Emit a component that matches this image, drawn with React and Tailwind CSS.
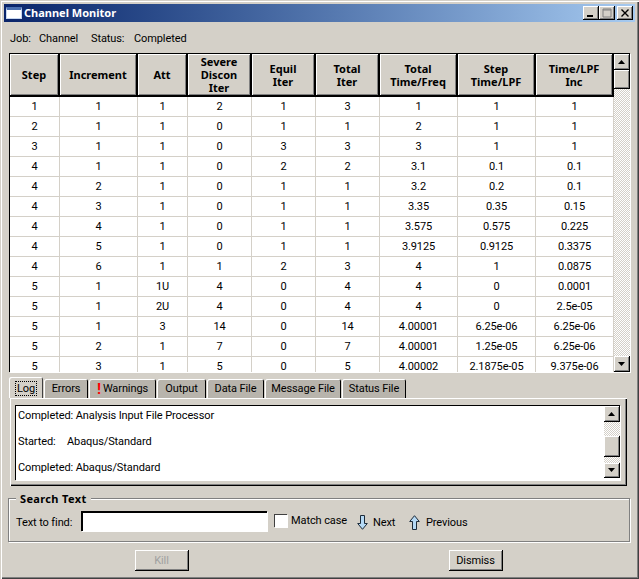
import React from 'react';

const columns = [
  { label: ['Step'], w: 'w-[50px]' },
  { label: ['Increment'], w: 'w-[78px]' },
  { label: ['Att'], w: 'w-[50px]' },
  { label: ['Severe', 'Discon', 'Iter'], w: 'w-[64px]' },
  { label: ['Equil', 'Iter'], w: 'w-[64px]' },
  { label: ['Total', 'Iter'], w: 'w-[64px]' },
  { label: ['Total', 'Time/Freq'], w: 'w-[78px]' },
  { label: ['Step', 'Time/LPF'], w: 'w-[78px]' },
  { label: ['Time/LPF', 'Inc'], w: 'w-[78px]' },
];

const rows = [
  ['1', '1', '1', '2', '1', '3', '1', '1', '1'],
  ['2', '1', '1', '0', '1', '1', '2', '1', '1'],
  ['3', '1', '1', '0', '3', '3', '3', '1', '1'],
  ['4', '1', '1', '0', '2', '2', '3.1', '0.1', '0.1'],
  ['4', '2', '1', '0', '1', '1', '3.2', '0.2', '0.1'],
  ['4', '3', '1', '0', '1', '1', '3.35', '0.35', '0.15'],
  ['4', '4', '1', '0', '1', '1', '3.575', '0.575', '0.225'],
  ['4', '5', '1', '0', '1', '1', '3.9125', '0.9125', '0.3375'],
  ['4', '6', '1', '1', '2', '3', '4', '1', '0.0875'],
  ['5', '1', '1U', '4', '0', '4', '4', '0', '0.0001'],
  ['5', '1', '2U', '4', '0', '4', '4', '0', '2.5e-05'],
  ['5', '1', '3', '14', '0', '14', '4.00001', '6.25e-06', '6.25e-06'],
  ['5', '2', '1', '7', '0', '7', '4.00001', '1.25e-05', '6.25e-06'],
  ['5', '3', '1', '5', '0', '5', '4.00002', '2.1875e-05', '9.375e-06'],
];

const boldFont = "font-bold font-['Noto_Sans',sans-serif] tracking-normal";
const raised = 'shadow-[inset_1px_1px_0_#fff,inset_-1px_-1px_0_#808080] border-r border-b border-[#000]';
const track = 'bg-[repeating-conic-gradient(#ffffff_0_25%,#d4d0c8_0_50%)] bg-[length:2px_2px]';

const ScrollBtn = ({ dir, h = 'h-[16px]' }) => (
  <div className={`${h} w-[16px] shrink-0 bg-[#d4d0c8] ${raised} flex items-center justify-center`}>
    {dir && (
      <svg width="7" height="4" viewBox="0 0 7 4">
        <path d={dir === 'up' ? 'M3.5 0L7 4H0Z' : 'M0 0H7L3.5 4Z'} fill="#000" />
      </svg>
    )}
  </div>
);

const TitleBtn = ({ children }) => (
  <div className={`w-[16px] h-[14px] bg-[#d4d0c8] ${raised} flex items-center justify-center`}>
    <svg width="10" height="10" viewBox="0 0 10 10">{children}</svg>
  </div>
);

const tabs = ['Log', 'Errors', 'Warnings', 'Output', 'Data File', 'Message File', 'Status File'];
const tabWidths = ['w-[34px]', 'w-[44px]', 'w-[67px]', 'w-[49px]', 'w-[57px]', 'w-[76px]', 'w-[64px]'];

const ArrowIcon = ({ up }) => (
  <svg width="11" height="15" viewBox="0 0 11 15" className={up ? 'mt-[2px]' : 'rotate-180 mt-[2px]'}>
    <path d="M5.5 .7L10.3 6.5H7.5V14.5H3.5V6.5H.7Z" fill="#b5d9f5" stroke="#1c2b3a" strokeWidth="1" />
  </svg>
);

export default function App() {
  return (
    <div className="w-[639px] h-[579px] flex flex-col bg-[#d4d0c8] text-[11px] tracking-[-0.1px] text-black font-['Roboto',sans-serif] shadow-[inset_1px_1px_0_#d4d0c8,inset_2px_2px_0_#fff,inset_-1px_-1px_0_#404040,inset_-2px_-2px_0_#808080] p-[4px] overflow-hidden">
      <div className="h-[18px] shrink-0 flex items-center bg-gradient-to-r from-[#0a246a] to-[#a6caf0] pl-[2px] pr-[2px]">
        <div className="w-[16px] h-[12px] bg-white border border-[#c8d8f0] border-t-[3px] border-t-[#4a6fb0]" />
        <span className={`ml-[2px] text-white ${boldFont}`}>Channel Monitor</span>
        <div className="ml-auto flex items-center">
          <TitleBtn><rect x="1" y="7" width="6" height="2" fill="#000" /></TitleBtn>
          <TitleBtn>
            <path d="M1 1H9V9H1ZM1 2H9" fill="none" stroke="#808080" />
          </TitleBtn>
          <div className="w-[2px]" />
          <TitleBtn><path d="M1.5 1.5L8.5 8.5M8.5 1.5L1.5 8.5" stroke="#000" strokeWidth="1.4" /></TitleBtn>
        </div>
      </div>

      <div className="h-[31px] shrink-0 flex items-center pl-[6px] pt-[3px]">
        <span className="w-[29px]">Job:</span>
        <span className="w-[52px]">Channel</span>
        <span className="w-[43px]">Status:</span>
        <span>Completed</span>
      </div>

      <div className="h-[319px] shrink-0 ml-[5px] w-[621px] flex border-t border-l border-[#000] shadow-[1px_1px_0_#fff]">
        <div className="w-[604px] shrink-0 overflow-hidden flex flex-col bg-white">
          <div className="flex h-[43px] shrink-0">
            {columns.map((c, i) => (
              <div key={i} className={`${c.w} shrink-0 bg-[#d4d0c8] ${raised} border-b-2 border-r-2 flex flex-col items-center justify-center ${boldFont} leading-[13px]`}>
                {c.label.map((l) => <span key={l}>{l}</span>)}
              </div>
            ))}
          </div>
          {rows.map((r, i) => (
            <div key={i} className="flex h-[20px] shrink-0">
              {r.map((v, j) => (
                <div key={j} className={`${columns[j].w} shrink-0 border-r border-b border-[#d4d0c8] flex items-center justify-center pt-[2px]`}>{v}</div>
              ))}
            </div>
          ))}
        </div>
        <div className="ml-auto w-[16px] flex flex-col">
          <ScrollBtn dir="up" />
          <ScrollBtn h="h-[19px]" />
          <div className={`flex-1 ${track}`} />
          <ScrollBtn dir="down" />
        </div>
      </div>

      <div className="h-[26px] shrink-0 flex items-end gap-[1px] pl-[5px]">
        {tabs.map((t, i) => (
          <div key={t} className={`${tabWidths[i]} h-[19px] shrink-0 rounded-t-[2px] flex items-center justify-center pt-[2px] ${i === 0 ? 'bg-[#d4d0c8] h-[21px] shadow-[inset_1px_1px_0_#fff,inset_-1px_0_0_#404040]' : 'bg-[#b8b4ac] shadow-[inset_1px_1px_0_#fff,inset_-1px_0_0_#000]'}`}>
            {t === 'Warnings' && <span className="text-[#ff0000] font-bold text-[15px] leading-none mr-[2px]">!</span>}
            {i === 0 ? <span className="border border-dotted border-black px-[1px] leading-[13px]">{t}</span> : t}
          </div>
        ))}
      </div>

      <div className="h-[88px] shrink-0 ml-[6px] w-[617px] pt-[7px] pl-[5px] pr-[7px] pb-[6px] shadow-[inset_1px_1px_0_#fff,inset_-1px_-1px_0_#000,inset_-2px_-2px_0_#808080]">
        <div className="h-full flex bg-white border-t border-l border-[#000] shadow-[1px_1px_0_#fff]">
          <div className="flex-1 flex flex-col gap-[12px] pl-[2px] pt-[3px] leading-[14px] overflow-hidden">
            <div>Completed: Analysis Input File Processor</div>
            <div className="flex">
              <span className="w-[49px]">Started:</span>
              <span>Abaqus/Standard</span>
            </div>
            <div>Completed: Abaqus/Standard</div>
          </div>
          <div className="w-[16px] shrink-0 flex flex-col pb-[2px]">
            <ScrollBtn dir="up" />
            <div className={`h-[14px] ${track}`} />
            <ScrollBtn h="h-[21px]" />
            <div className={`flex-1 ${track}`} />
            <ScrollBtn dir="down" h="h-[15px]" />
          </div>
        </div>
      </div>

      <div className="relative h-[44px] shrink-0 mt-[12px] ml-[4px] w-[622px] border border-[#808080] shadow-[1px_1px_0_#fff,inset_1px_1px_0_#fff] flex items-center pl-[7px] pt-[2px]">
        <span className={`absolute left-[7px] -top-[7px] bg-[#d4d0c8] px-[4px] ${boldFont} leading-[14px] !tracking-[0.35px]`}>Search Text</span>
        <span className="w-[65px] pt-[4px]">Text to find:</span>
        <div className="w-[186px] h-[20px] bg-white border-t-2 border-l-2 border-[#000] shadow-[1px_1px_0_#fff]" />
        <div className="ml-[7px] w-[13px] h-[13px] bg-white border-t border-l border-[#404040] shadow-[1px_1px_0_#fff] -mt-[1px]" />
        <span className="ml-[4px] w-[66px] pt-[1px]">Match case</span>
        <ArrowIcon />
        <span className="ml-[5px] w-[36px] pt-[4px]">Next</span>
        <ArrowIcon up />
        <span className="ml-[6px] pt-[4px]">Previous</span>
      </div>

      <div className="flex-1 flex items-start pl-[131px] pt-[8px]">
        <div className={`w-[54px] h-[21px] ${raised} flex items-center justify-center pt-[2px] text-[#a0a0a0]`}>Kill</div>
        <div className={`ml-[260px] w-[54px] h-[21px] ${raised} flex items-center justify-center pt-[2px]`}>Dismiss</div>
      </div>
    </div>
  );
}
